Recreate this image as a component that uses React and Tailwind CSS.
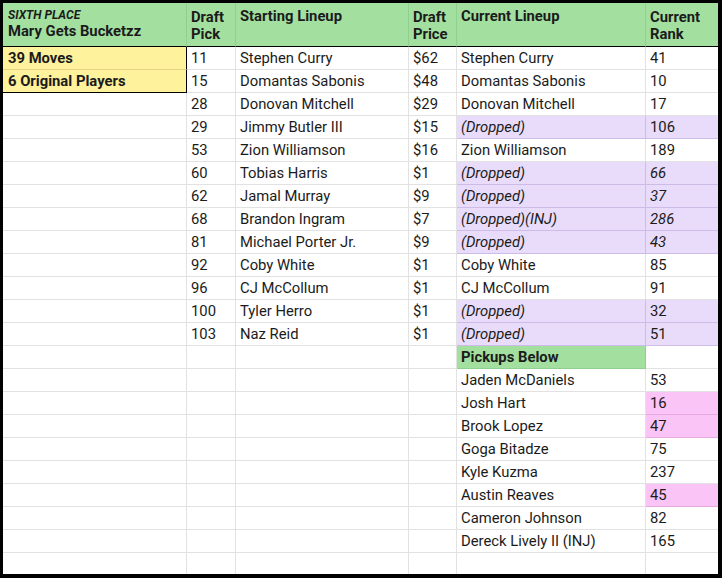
import React from "react";

const players = [
  { pick: "11", name: "Stephen Curry", price: "$62", current: "Stephen Curry", rank: "41" },
  { pick: "15", name: "Domantas Sabonis", price: "$48", current: "Domantas Sabonis", rank: "10" },
  { pick: "28", name: "Donovan Mitchell", price: "$29", current: "Donovan Mitchell", rank: "17" },
  { pick: "29", name: "Jimmy Butler III", price: "$15", current: "(Dropped)", rank: "106", dropped: true },
  { pick: "53", name: "Zion Williamson", price: "$16", current: "Zion Williamson", rank: "189" },
  { pick: "60", name: "Tobias Harris", price: "$1", current: "(Dropped)", rank: "66", dropped: true, italicRank: true },
  { pick: "62", name: "Jamal Murray", price: "$9", current: "(Dropped)", rank: "37", dropped: true, italicRank: true },
  { pick: "68", name: "Brandon Ingram", price: "$7", current: "(Dropped)(INJ)", rank: "286", dropped: true, italicRank: true },
  { pick: "81", name: "Michael Porter Jr.", price: "$9", current: "(Dropped)", rank: "43", dropped: true, italicRank: true },
  { pick: "92", name: "Coby White", price: "$1", current: "Coby White", rank: "85" },
  { pick: "96", name: "CJ McCollum", price: "$1", current: "CJ McCollum", rank: "91" },
  { pick: "100", name: "Tyler Herro", price: "$1", current: "(Dropped)", rank: "32", dropped: true },
  { pick: "103", name: "Naz Reid", price: "$1", current: "(Dropped)", rank: "51", dropped: true },
];

const pickups = [
  { name: "Jaden McDaniels", rank: "53" },
  { name: "Josh Hart", rank: "16", hot: true },
  { name: "Brook Lopez", rank: "47", hot: true },
  { name: "Goga Bitadze", rank: "75" },
  { name: "Kyle Kuzma", rank: "237" },
  { name: "Austin Reaves", rank: "45", hot: true },
  { name: "Cameron Johnson", rank: "82" },
  { name: "Dereck Lively II (INJ)", rank: "165" },
];

// plain white cell, gray gridlines
const cell = "h-[23px] border-b border-r border-[#e2e2e2] px-[4px] leading-[22px] whitespace-nowrap overflow-hidden";
const lastCell = "h-[23px] border-b border-[#e2e2e2] px-[4px] leading-[22px] whitespace-nowrap overflow-hidden";
const purple = "h-[23px] border-b border-r border-[#cdbbe8] bg-[#e8dcfa] px-[4px] leading-[22px] italic whitespace-nowrap overflow-hidden";
const purpleLast = "h-[23px] border-b border-[#cdbbe8] bg-[#e8dcfa] px-[4px] leading-[22px] whitespace-nowrap overflow-hidden";
const head = "h-[44px] border-b border-r border-b-black border-r-[#8fcf8f] bg-[#a3e0a0] px-[4px] pb-[3px] font-bold leading-[17px] flex flex-col justify-end";

export default function App() {
  return (
    <div className="w-[722px] h-[578px] bg-white border-t-[3px] border-l-[3px] border-r-[4px] border-b-[4px] border-black font-[Roboto,sans-serif] text-[14.8px] text-[#1b1b1b] overflow-hidden">
      <div className="grid grid-cols-[184px_49px_173px_48px_189px_72px]">
        {/* header row */}
        <div className="h-[44px] border-b border-r border-b-black border-r-[#8fcf8f] bg-[#a3e0a0] px-[5px] pb-[6px] font-bold flex flex-col justify-end">
          <div className="text-[12px] leading-[15px] italic">SIXTH PLACE</div>
          <div className="leading-[17px]">Mary Gets Bucketzz</div>
        </div>
        <div className={head}><div>Draft</div><div>Pick</div></div>
        <div className={head}><div className="mb-auto pt-[5px]">Starting Lineup</div></div>
        <div className={head}><div>Draft</div><div>Price</div></div>
        <div className={head}><div className="mb-auto pt-[5px]">Current Lineup</div></div>
        <div className="h-[44px] border-b border-b-black bg-[#a3e0a0] px-[4px] pb-[3px] font-bold leading-[17px] flex flex-col justify-end">
          <div>Current</div><div>Rank</div>
        </div>

        {/* drafted players */}
        {players.map((p, i) => (
          <React.Fragment key={p.pick}>
            {i === 0 && (
              <div className="h-[23px] border-b border-r border-b-[#e3d487] border-r-black bg-[#fff29c] px-[5px] leading-[22px] font-bold">39 Moves</div>
            )}
            {i === 1 && (
              <div className="h-[23px] border-b border-r border-black bg-[#fff29c] px-[5px] leading-[22px] font-bold">6 Original Players</div>
            )}
            {i > 1 && <div className={cell}></div>}
            <div className={cell}>{p.pick}</div>
            <div className={cell}>{p.name}</div>
            <div className={cell}>{p.price}</div>
            {p.dropped ? (
              <>
                <div className={purple}>{p.current}</div>
                <div className={p.italicRank ? purpleLast + " italic" : purpleLast}>{p.rank}</div>
              </>
            ) : (
              <>
                <div className={cell}>{p.current}</div>
                <div className={lastCell}>{p.rank}</div>
              </>
            )}
          </React.Fragment>
        ))}

        {/* pickups header */}
        <div className={cell}></div>
        <div className={cell}></div>
        <div className={cell}></div>
        <div className={cell}></div>
        <div className="h-[23px] border-b border-r border-[#8fcf8f] bg-[#a3e0a0] px-[4px] leading-[22px] font-bold">Pickups Below</div>
        <div className={lastCell}></div>

        {pickups.map((p) => (
          <React.Fragment key={p.name}>
            <div className={cell}></div>
            <div className={cell}></div>
            <div className={cell}></div>
            <div className={cell}></div>
            <div className={cell}>{p.name}</div>
            <div className={p.hot ? "h-[23px] border-b border-[#e6a9e0] bg-[#fbc4f6] px-[4px] leading-[22px]" : lastCell}>{p.rank}</div>
          </React.Fragment>
        ))}

        {/* trailing empty row */}
        <div className="h-[21px] border-r border-[#e2e2e2]"></div>
        <div className="h-[21px] border-r border-[#e2e2e2]"></div>
        <div className="h-[21px] border-r border-[#e2e2e2]"></div>
        <div className="h-[21px] border-r border-[#e2e2e2]"></div>
        <div className="h-[21px] border-r border-[#e2e2e2]"></div>
        <div className="h-[21px]"></div>
      </div>
    </div>
  );
}
